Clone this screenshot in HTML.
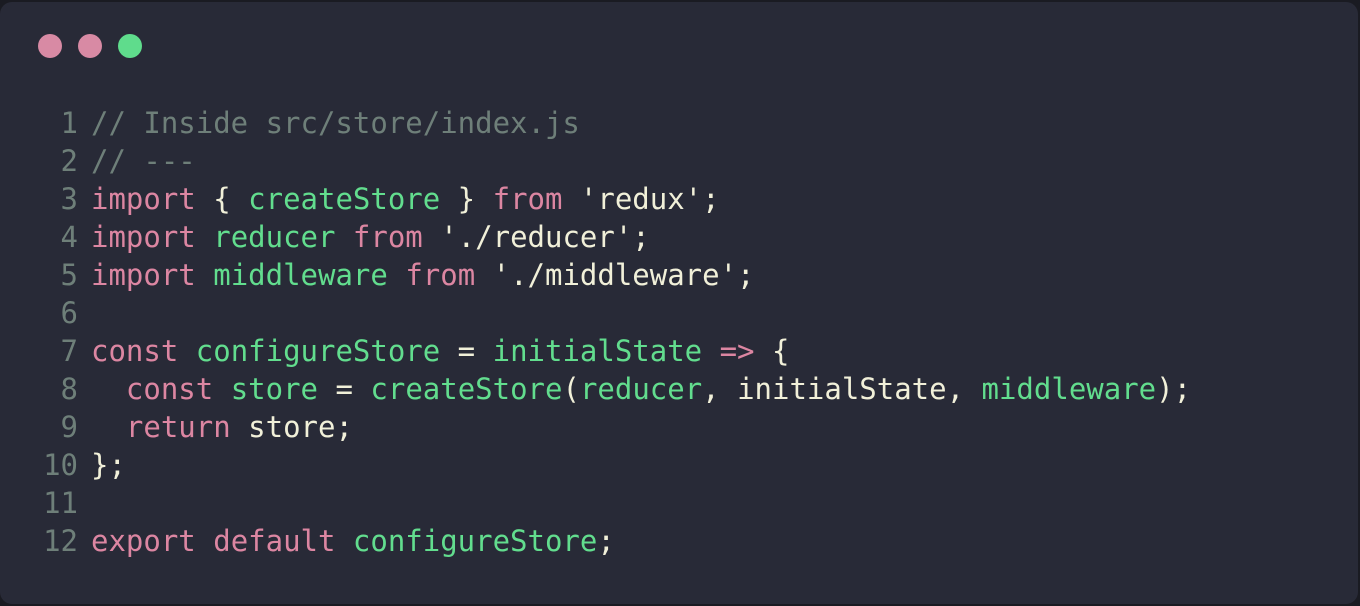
<!DOCTYPE html>
<html><head><meta charset="utf-8"><style>
html,body{margin:0;padding:0;background:#1a1b22;}
.win{position:absolute;left:0;top:2px;width:1358px;height:602px;background:#282a37;border-radius:12px;}
.dot{position:absolute;top:32px;width:24px;height:24px;border-radius:50%;}
pre{position:absolute;left:0;top:102px;margin:0;font-family:"DejaVu Sans Mono","Liberation Mono",monospace;font-size:29px;line-height:38px;color:#f1f0d9;}
.n{display:inline-block;width:78px;text-align:right;color:#6e7f79;margin-right:13px;}
.c{color:#6e7f79}.k{color:#dc86a2}.g{color:#62dd8e}
</style></head><body>
<div class="win">
<div class="dot" style="left:38px;background:#d88aa4"></div>
<div class="dot" style="left:78px;background:#d88aa4"></div>
<div class="dot" style="left:118px;background:#5fdc8c"></div>
<pre><span class="n">1</span><span class="c">// Inside src/store/index.js</span>
<span class="n">2</span><span class="c">// ---</span>
<span class="n">3</span><span class="k">import</span> { <span class="g">createStore</span> } <span class="k">from</span> 'redux';
<span class="n">4</span><span class="k">import</span> <span class="g">reducer</span> <span class="k">from</span> './reducer';
<span class="n">5</span><span class="k">import</span> <span class="g">middleware</span> <span class="k">from</span> './middleware';
<span class="n">6</span>
<span class="n">7</span><span class="k">const</span> <span class="g">configureStore</span> = <span class="g">initialState</span> <span class="k">=&gt;</span> {
<span class="n">8</span>  <span class="k">const</span> <span class="g">store</span> = <span class="g">createStore</span>(<span class="g">reducer</span>, initialState, <span class="g">middleware</span>);
<span class="n">9</span>  <span class="k">return</span> store;
<span class="n">10</span>};
<span class="n">11</span>
<span class="n">12</span><span class="k">export</span> <span class="k">default</span> <span class="g">configureStore</span>;</pre>
</div>
</body></html>
